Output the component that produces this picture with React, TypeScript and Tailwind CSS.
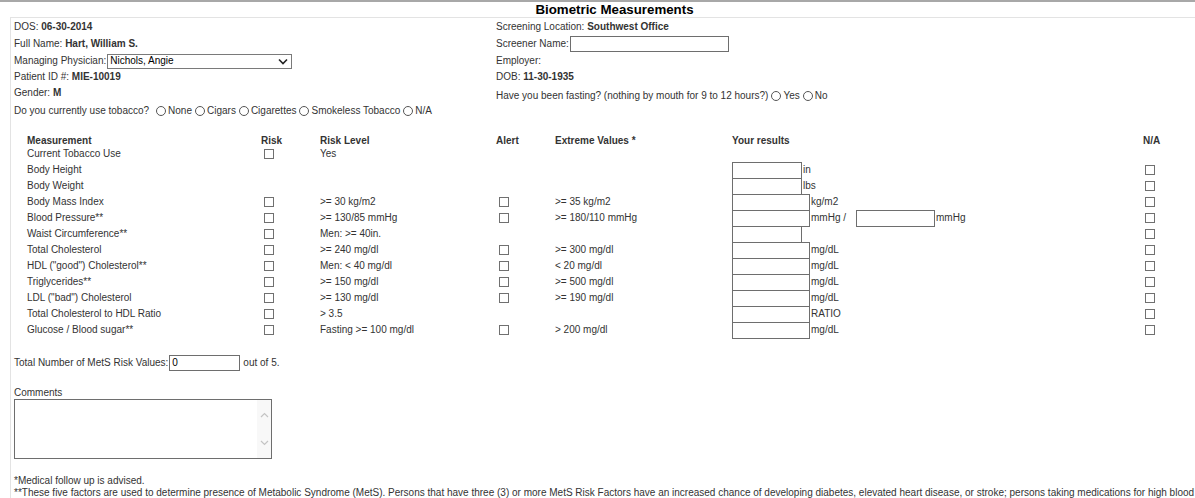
import React from 'react';

type Row = {
  name: string;
  risk?: boolean;
  level?: string;
  alert?: boolean;
  extreme?: string;
  input?: number;
  unit?: string;
  bp?: boolean;
};

const rows: Row[] = [
  { name: 'Current Tobacco Use', risk: true, level: 'Yes' },
  { name: 'Body Height', input: 70, unit: 'in' },
  { name: 'Body Weight', input: 70, unit: 'lbs' },
  { name: 'Body Mass Index', risk: true, level: '>= 30 kg/m2', alert: true, extreme: '>= 35 kg/m2', input: 78, unit: 'kg/m2' },
  { name: 'Blood Pressure**', risk: true, level: '>= 130/85 mmHg', alert: true, extreme: '>= 180/110 mmHg', input: 78, unit: 'mmHg /', bp: true },
  { name: 'Waist Circumference**', risk: true, level: 'Men: >= 40in.', input: 70 },
  { name: 'Total Cholesterol', risk: true, level: '>= 240 mg/dl', alert: true, extreme: '>= 300 mg/dl', input: 78, unit: 'mg/dL' },
  { name: 'HDL ("good") Cholesterol**', risk: true, level: 'Men: < 40 mg/dl', alert: true, extreme: '< 20 mg/dl', input: 78, unit: 'mg/dL' },
  { name: 'Triglycerides**', risk: true, level: '>= 150 mg/dl', alert: true, extreme: '>= 500 mg/dl', input: 78, unit: 'mg/dL' },
  { name: 'LDL ("bad") Cholesterol', risk: true, level: '>= 130 mg/dl', alert: true, extreme: '>= 190 mg/dl', input: 78, unit: 'mg/dL' },
  { name: 'Total Cholesterol to HDL Ratio', risk: true, level: '> 3.5', input: 78, unit: 'RATIO' },
  { name: 'Glucose / Blood sugar**', risk: true, level: 'Fasting >= 100 mg/dl', alert: true, extreme: '> 200 mg/dl', input: 78, unit: 'mg/dL' },
];

function Box() {
  return <span className="inline-block h-[10px] w-[10px] border border-[#707070] bg-white" />;
}

function Radio({ label }: { label: string }) {
  return (
    <span className="inline-flex items-center gap-[2px]">
      <span className="inline-block h-[10px] w-[10px] rounded-full border border-[#555]" />
      <span>{label}</span>
    </span>
  );
}

function Field({ w }: { w: number }) {
  const cls = w === 70 ? 'w-[70px]' : 'w-[78px]';
  return <span className={`${cls} inline-block h-[17px] -mb-px border border-[#6e6e6e] bg-white`} />;
}

export default function App() {
  return (
    <div className="h-[498px] w-[1195px] overflow-hidden bg-white font-['Liberation_Sans',Arial,sans-serif] text-[10px] leading-[12px] text-[#333]">
      <div className="h-[2px] bg-[#a8a8a8]" />
      <div className="h-[15px] pl-[34px] text-center text-[13.3px] font-bold leading-[16px] text-black">
        Biometric Measurements
      </div>
      <div className="ml-[10px] border-l border-t border-[#e3e3e3] pl-[3px]">
        {/* header info */}
        <div className="grid grid-cols-[482px_1fr]">
          <div className="flex flex-col">
            <div className="flex h-[17px] items-center">
              DOS:&nbsp;<b>06-30-2014</b>
            </div>
            <div className="flex h-[17px] items-center">
              Full Name:&nbsp;<b>Hart, William S.</b>
            </div>
            <div className="flex h-[18px] items-center">
              Managing Physician:
              <span className="ml-[1px] flex h-[15px] w-[185px] items-center justify-between border border-[#7a7a7a] pl-[2px] pr-[3px] text-black">
                Nichols, Angie
                <svg width="10" height="7" viewBox="0 0 10 7" fill="none">
                  <path d="M1 1.5 5 5.5 9 1.5" stroke="#222" strokeWidth="1.6" />
                </svg>
              </span>
            </div>
            <div className="flex h-[14px] items-center">
              Patient ID #:&nbsp;<b>MIE-10019</b>
            </div>
            <div className="flex h-[17px] items-center">
              Gender:&nbsp;<b>M</b>
            </div>
            <div className="flex h-[20px] items-center gap-[3px]">
              <span className="mr-[4px]">Do you currently use tobacco?</span>
              <Radio label="None" />
              <Radio label="Cigars" />
              <Radio label="Cigarettes" />
              <Radio label="Smokeless Tobacco" />
              <Radio label="N/A" />
            </div>
          </div>
          <div className="flex flex-col">
            <div className="flex h-[17px] items-center">
              Screening Location:&nbsp;<b>Southwest Office</b>
            </div>
            <div className="flex h-[17px] items-center">
              Screener Name:
              <span className="ml-[1px] inline-block h-[16px] w-[159px] border border-[#6e6e6e]" />
            </div>
            <div className="flex h-[18px] items-center">Employer:</div>
            <div className="flex h-[14px] items-center">
              DOB:&nbsp;<b>11-30-1935</b>
            </div>
            <div className="flex h-[24px] items-center gap-[3px]">
              <span>Have you been fasting? (nothing by mouth for 9 to 12 hours?)</span>
              <Radio label="Yes" />
              <Radio label="No" />
            </div>
          </div>
        </div>

        {/* measurements table */}
        <div className="mt-[14px] pl-[13px]">
          <div className="grid h-[11px] grid-cols-[234px_59px_176px_59px_177px_411px_1fr] items-center font-bold">
            <span>Measurement</span>
            <span>Risk</span>
            <span>Risk Level</span>
            <span>Alert</span>
            <span>Extreme Values *</span>
            <span>Your results</span>
            <span>N/A</span>
          </div>
          {rows.map((r) => (
            <div key={r.name} className="grid h-[16px] grid-cols-[234px_59px_176px_59px_177px_411px_1fr] items-center">
              <span>{r.name}</span>
              <span className="flex pl-[3px]">{r.risk && <Box />}</span>
              <span>{r.level}</span>
              <span className="flex pl-[3px]">{r.alert && <Box />}</span>
              <span>{r.extreme}</span>
              <span className="flex h-[16px] items-start">
                {r.input && <Field w={r.input} />}
                {r.unit && <span className="ml-px self-center">{r.unit}</span>}
                {r.bp && (
                  <>
                    <span className="ml-[10px] inline-block h-[17px] w-[79px] border border-[#6e6e6e] bg-white" />
                    <span className="ml-px self-center">mmHg</span>
                  </>
                )}
              </span>
              <span className="flex pl-[2px]">
                {r.name !== 'Current Tobacco Use' && <Box />}
              </span>
            </div>
          ))}
        </div>

        {/* totals */}
        <div className="mt-[17px] flex h-[16px] items-center">
          Total Number of MetS Risk Values:
          <span className="ml-[1px] flex h-[16px] w-[71px] items-center border border-[#6e6e6e] pl-[2px] text-black">0</span>
          <span className="ml-[3px]">out of 5.</span>
        </div>

        <div className="mt-[16px] h-[12px] leading-[12px]">Comments</div>
        <div className="flex h-[60px] w-[258px] border border-[#6e6e6e]">
          <div className="flex-1" />
          <div className="flex w-[14px] flex-col items-center justify-between bg-[#f8f8f8] py-[12px]">
            <svg width="9" height="6" viewBox="0 0 9 6" fill="none">
              <path d="M1 5 4.5 1.5 8 5" stroke="#c4c4c4" strokeWidth="1.2" />
            </svg>
            <svg width="9" height="6" viewBox="0 0 9 6" fill="none">
              <path d="M1 1 4.5 4.5 8 1" stroke="#c4c4c4" strokeWidth="1.2" />
            </svg>
          </div>
        </div>

        <div className="mt-[16px] h-[12px] leading-[12px]">*Medical follow up is advised.</div>
        <div className="h-[12px] whitespace-nowrap leading-[12px]">
          **These five factors are used to determine presence of Metabolic Syndrome (MetS). Persons that have three (3) or more MetS Risk Factors have an increased chance of developing diabetes, elevated heart disease, or stroke; persons taking medications for high blood pressure
        </div>
      </div>
    </div>
  );
}
